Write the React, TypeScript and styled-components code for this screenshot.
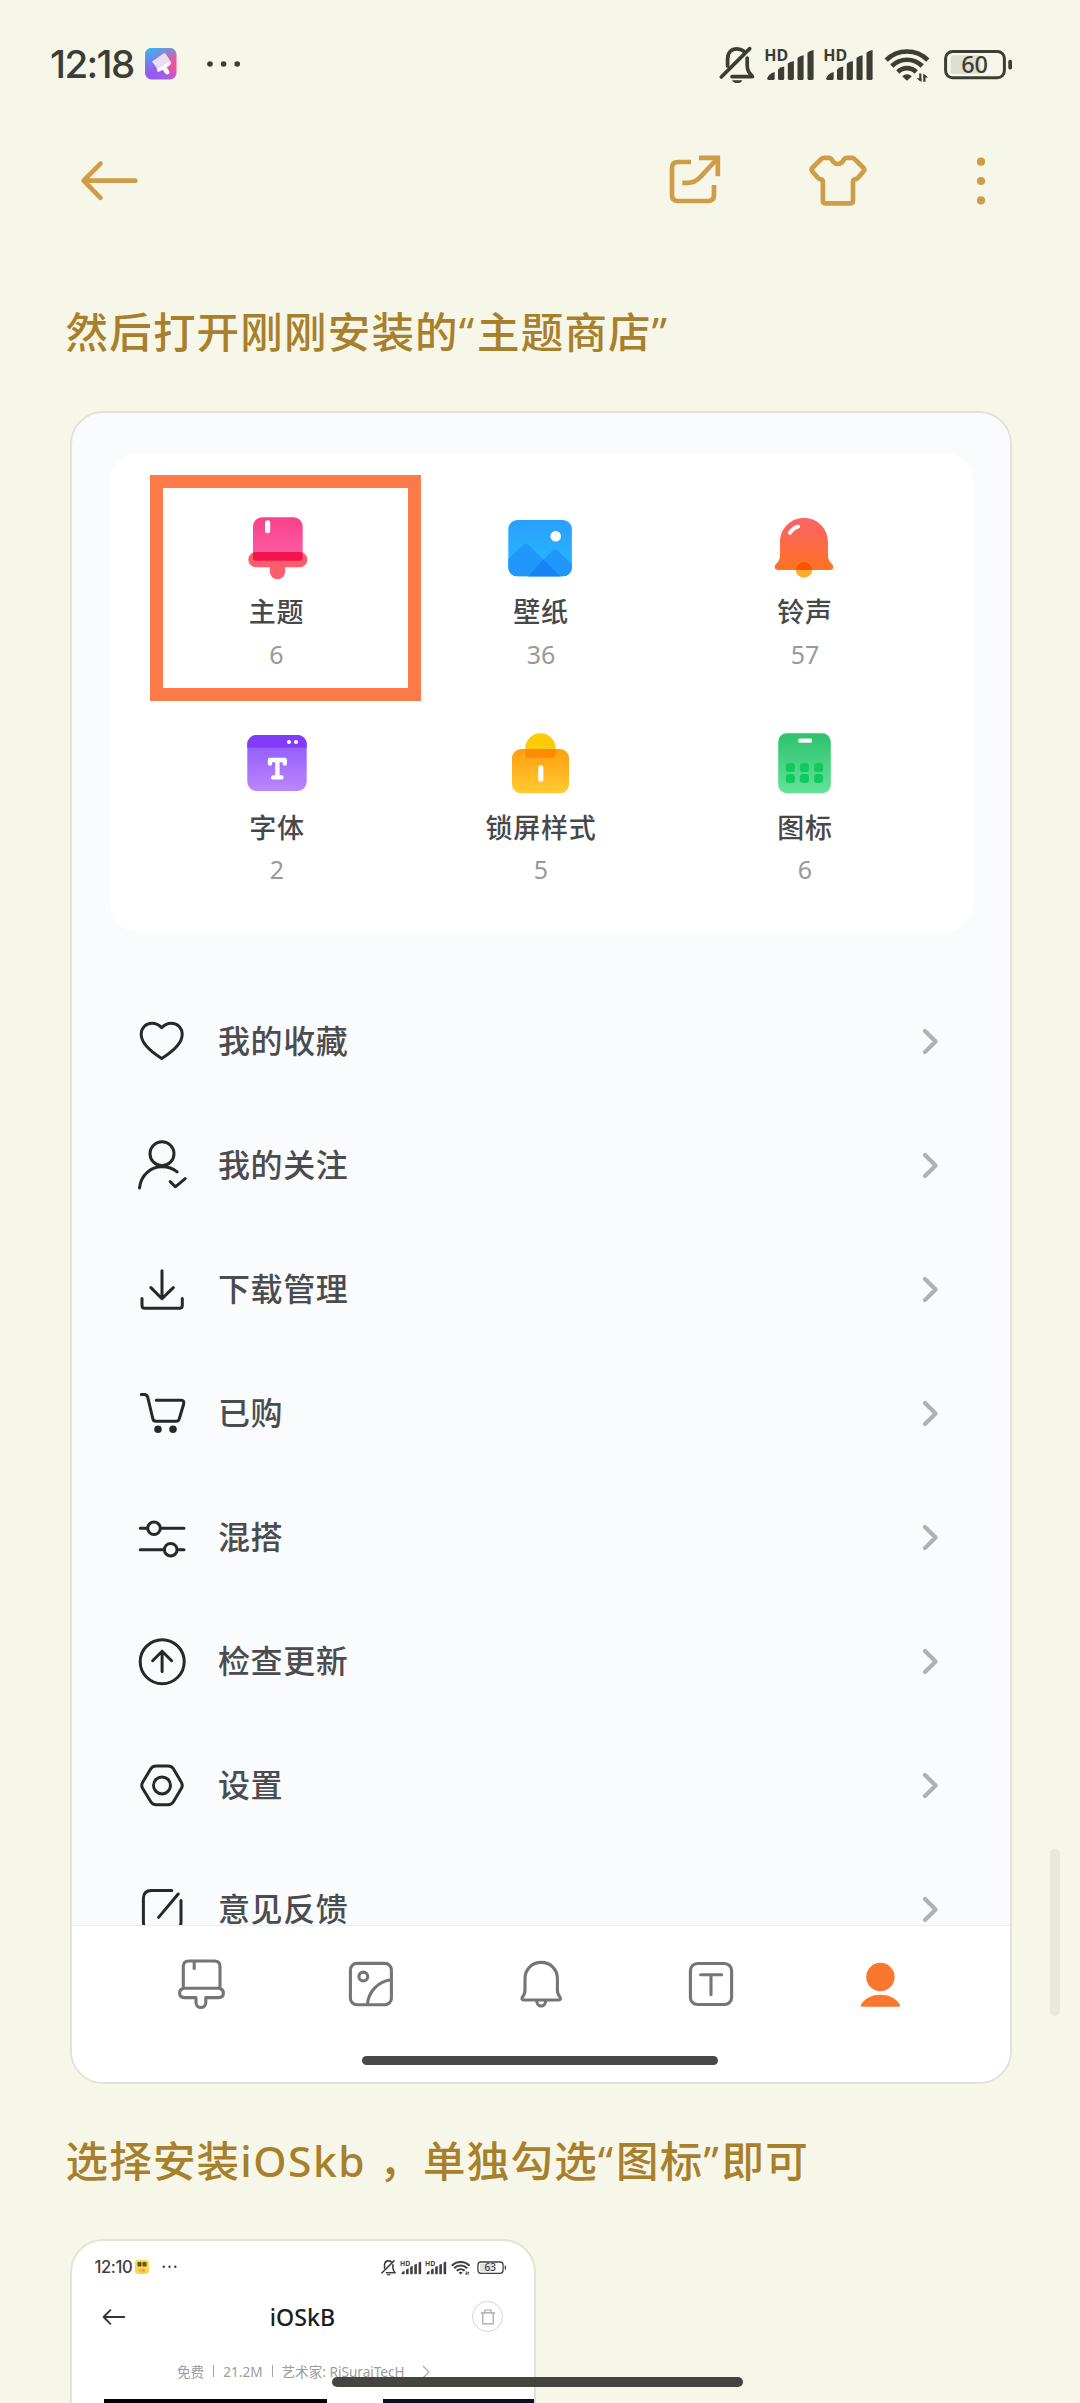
import React from "react";
import styled, { createGlobalStyle } from "styled-components";

const latin = `"Noto Sans", "Noto Sans CJK SC", sans-serif`;

const GlobalStyle = createGlobalStyle`
  * { box-sizing: border-box; }
  body { margin: 0; background: #f6f7e8; font-family: ${latin}; }
  svg { display: block; flex: none; }
`;

const Screen = styled.div`
  position: relative;
  width: 1080px;
  height: 2403px;
  overflow: hidden;
  background: #f6f7e8;
`;

/* ---------- status bar ---------- */

const StatusRow = styled.div`
  display: flex;
  align-items: center;
  height: 128px;
  padding: 0 67px 0 50px;
`;

const Clock = styled.span<{ $size: number; $track: number; $color: string; $width: number }>`
  width: ${(p) => p.$width}px;
  font-family: Inter, ${latin};
  font-size: ${(p) => p.$size}px;
  line-height: 1;
  letter-spacing: ${(p) => p.$track}px;
  font-weight: 500;
  color: ${(p) => p.$color};
  white-space: nowrap;
`;

const Spacer = styled.div`
  flex: 1;
`;

const StatusGroup = styled.div<{ $scale: number }>`
  display: flex;
  gap: ${(p) => 7 * p.$scale}px;
`;

const MoreDots = ({ scale, color }: { scale: number; color: string }) => (
  <svg width={36 * scale} height={8 * scale} viewBox="0 0 36 8" fill={color}>
    <circle cx="4" cy="4" r="2.8" />
    <circle cx="17.6" cy="4" r="2.8" />
    <circle cx="31.2" cy="4" r="2.8" />
  </svg>
);

const Signal = ({ scale, color }: { scale: number; color: string }) => (
  <svg width={52 * scale} height={44 * scale} viewBox="0 0 52 44" fill={color}>
    <text x="0.2" y="18.7" fontSize="16.2" fontWeight="700" textLength="24" lengthAdjust="spacingAndGlyphs">
      HD
    </text>
    <path d="M3.2 36.5Q4.5 31.5 10.7 30V36.5Q10.7 38 9.2 38H4.7Q3.2 38 3.2 36.5Z" />
    <path d="M14 27.5Q16 25 20.2 24.5V36.5Q20.2 38 18.7 38H15.5Q14 38 14 36.5Z" />
    <path d="M23.8 21.5Q26 19.5 29.9 19V36.5Q29.9 38 28.4 38H25.3Q23.8 38 23.8 36.5Z" />
    <path d="M33.5 16Q35.5 13.8 39.6 13.2V36.5Q39.6 38 38.1 38H35Q33.5 38 33.5 36.5Z" />
    <path d="M43.5 10.7Q45.5 8.6 49.6 8V36.5Q49.6 38 48.1 38H45Q43.5 38 43.5 36.5Z" />
  </svg>
);

const StatusIcons = ({ scale, color, fill, level }: { scale: number; color: string; fill: string; level: string }) => (
  <StatusGroup $scale={scale}>
    <svg width={40 * scale} height={44 * scale} viewBox="0 0 40 44" fill="none" stroke={color} strokeWidth="3.7" strokeLinecap="round" strokeLinejoin="round">
      <path d="M4.3 35L32.7 6.6" />
      <path d="M10.6 24V17C10.6 10.5 14.5 6.8 20 6.8C22.5 6.8 24.8 7.6 26.5 9" />
      <path d="M30.2 16V23C30.2 29 32 30.5 35.5 34.6H15" />
      <path d="M15 38.2H25.5C24.5 40.2 22.5 41 20.2 41S16 40.2 15 38.2Z" fill={color} stroke="none" />
    </svg>
    <Signal scale={scale} color={color} />
    <Signal scale={scale} color={color} />
    <svg width={52 * scale} height={44 * scale} viewBox="0 0 52 44" fill="none" stroke={color} strokeWidth="4.6">
      <path d="M4.2 18.2C15.5 6.6 34.5 6.6 45.8 18.2" />
      <path d="M9.8 24C18.3 15.6 31.7 15.6 40.2 24" />
      <path d="M15.8 30C21 24.8 29 24.8 34.2 30" />
      <path d="M20.3 34.4C22.7 31.6 27.3 31.6 29.7 34.4L25 38.7Z" fill={color} stroke="none" />
      <path d="M38.3 31.5V38.5M42.4 39.8V33.5" strokeWidth="2.2" />
      <path d="M34.3 36.2H39.4V40ZM46.2 35.4H41.3V31.5Z" fill={color} stroke="none" />
    </svg>
    <svg width={72 * scale} height={44 * scale} viewBox="0 0 72 44">
      <rect x="9.7" y="13.2" width="30" height="18.6" rx="2" fill={fill} />
      <rect x="4.6" y="9.4" width="58.8" height="26.4" rx="7" fill="none" stroke={color} strokeWidth="3" />
      <rect x="67.3" y="17.8" width="3.7" height="9.6" rx="1.6" fill={color} />
      <text x="33.6" y="30.8" fontSize="23.5" fontWeight="500" textAnchor="middle" fill={color}>
        {level}
      </text>
    </svg>
  </StatusGroup>
);

const ThemeAppIcon = () => (
  <svg width="32" height="32" viewBox="0 0 32 32">
    <defs>
      <linearGradient id="appA" x1="0" y1="1" x2="1" y2="0.2">
        <stop offset="0" stopColor="#8e5cf9" />
        <stop offset="0.45" stopColor="#a35be8" />
        <stop offset="0.75" stopColor="#f0509f" />
        <stop offset="1" stopColor="#f2559e" />
      </linearGradient>
      <linearGradient id="appB" x1="0.25" y1="0" x2="0.5" y2="0.6">
        <stop offset="0" stopColor="#37b2f2" />
        <stop offset="1" stopColor="#37b2f2" stopOpacity="0" />
      </linearGradient>
    </defs>
    <rect width="31.5" height="31.5" rx="6.5" fill="url(#appA)" />
    <rect width="31.5" height="31.5" rx="6.5" fill="url(#appB)" />
    <path d="M7 13.5L18.5 5.5Q20 4.8 20.8 6L25 12.5L12 20.5Z" fill="#e9def6" />
    <path d="M12 20.5L25 12.5Q27 15.5 24.8 17.3L21.8 19.2L24.3 23.5C25.4 26 22 27.8 20.4 25.5L17.6 21.7L14.5 23.6Q12.8 24.2 11.8 22.4Z" fill="#fff" />
  </svg>
);

const IconSlot = styled.div<{ $right: number }>`
  margin-right: ${(p) => p.$right}px;
`;

/* ---------- top app bar ---------- */

const AppBar = styled.header`
  display: flex;
  align-items: center;
  height: 106px;
  padding: 0 63px 0 73px;
`;

const AppBarActions = styled.div`
  display: flex;
  gap: 71px;
  margin-left: auto;
`;

const gold = { fill: "none", stroke: "#cf9d48", strokeWidth: 4.7 } as const;

const BackIcon = () => (
  <svg width="72" height="72" viewBox="0 0 72 72" {...gold} strokeLinecap="round" strokeLinejoin="round">
    <path d="M27.5 18.6L10.6 35.7L27.5 52.8M10.6 35.7H62.4" />
  </svg>
);

const ShareIcon = () => (
  <svg width="72" height="72" viewBox="0 0 72 72" {...gold}>
    <path d="M32 17H19Q13 17 13 23V50Q13 56 19 56H49Q55 56 55 50V40" />
    <path d="M40 12.9H58.8V31.3" />
    <path d="M58 14L41.5 31.8Q36 37.8 28 37.8H23.3" />
  </svg>
);

const ShirtIcon = () => (
  <svg width="72" height="72" viewBox="0 0 72 72" {...gold} strokeLinejoin="round">
    <path d="M22 12.8H27Q28.6 12.8 29.4 14.2C31 17.2 32.8 19 35.8 19S40.6 17.2 42.2 14.2Q43 12.8 44.6 12.8H50Q51.4 12.8 52.4 13.8L61.6 23Q63 24.6 61.6 26.2L56.3 32.6Q54.8 34.3 53 34.3Q51 34.6 51 37V55.8Q51 58.3 48.5 58.3H23.4Q20.9 58.3 20.9 55.8V37Q20.9 34.6 18.9 34.3Q17 34.3 15.6 32.6L10.2 26.2Q9 24.6 10.2 23L19.6 13.8Q20.6 12.8 22 12.8Z" />
  </svg>
);

const KebabIcon = () => (
  <svg width="72" height="72" viewBox="0 0 72 72" fill="#cf9d48">
    <circle cx="36" cy="16.7" r="4.1" />
    <circle cx="36" cy="36" r="4.1" />
    <circle cx="36" cy="55.4" r="4.1" />
  </svg>
);

/* ---------- article ---------- */

const Article = styled.main`
  display: flex;
  flex-direction: column;
  padding-top: 68px;
`;

const Heading = styled.p`
  margin: 0 0 0 65.5px;
  height: 60px;
  font-size: 42.5px;
  font-weight: 500;
  line-height: 60px;
  letter-spacing: 1.2px;
  color: #a8802c;
  white-space: nowrap;
`;

const Latin = styled.span`
  margin-right: 1px;
  letter-spacing: 1.5px;
`;

const Quote = styled.span`
  font-weight: 400;
  letter-spacing: 2.9px;
`;

const Shot = styled.section`
  display: flex;
  flex-direction: column;
  width: 942px;
  height: 1673px;
  margin: 49px 0 47px 70px;
  border: 2px solid #e1e3d7;
  border-radius: 33px;
  background: #fafbfd;
  overflow: hidden;
`;

const ScrollPane = styled.div`
  height: 1512px;
  overflow: hidden;
`;

const Grid = styled.div`
  display: grid;
  grid-template-columns: repeat(3, 264px);
  grid-auto-rows: 215.5px;
  width: 863px;
  height: 479px;
  margin: 40px 0 0 38px;
  padding: 22px 0 0 35px;
  border-radius: 28px;
  background: #fff;
`;

const Tile = styled.div<{ $marked?: boolean }>`
  display: flex;
  flex-direction: column;
  align-items: center;
  padding-top: 37px;
  ${(p) =>
    p.$marked
      ? `width: 271px; height: 225.5px;
         margin-left: 5px; padding: 24px 18px 0 0;
         border: 13px solid #fc7b49;`
      : ""}
`;

const TileLabel = styled.span`
  margin-top: 10px;
  height: 36px;
  font-size: 27px;
  font-weight: 500;
  line-height: 36px;
  letter-spacing: 0.8px;
  color: #47484a;
  white-space: nowrap;
`;

const TileCount = styled.span`
  margin-top: 5.5px;
  height: 36px;
  font-size: 25px;
  line-height: 36px;
  color: #999;
`;

const TileIcon = ({ children }: { children: React.ReactNode }) => (
  <svg width="72" height="72" viewBox="0 0 72 72">
    {children}
  </svg>
);

const Gradient = ({ id, from, to }: { id: string; from: string; to: string }) => (
  <defs>
    <linearGradient id={id} x1="0" y1="0" x2="0" y2="1">
      <stop offset="0" stopColor={from} />
      <stop offset="1" stopColor={to} />
    </linearGradient>
  </defs>
);

const tiles = [
  {
    label: "主题",
    count: "6",
    marked: true,
    art: (
      <>
        <Gradient id="pink" from="#f9418b" to="#fd60a5" />
        <rect x="12" y="5.3" width="49.7" height="43.5" rx="9" fill="url(#pink)" />
        <path d="M15 40H58.7A7.6 7.6 0 0 1 58.7 55.3H44.2V59.5A7.7 7.7 0 0 1 28.8 59.5V55.3H15A7.6 7.6 0 0 1 15 40Z" fill="#fb5d6c" />
        <path d="M12 40.5Q13.2 40 15 40H58.7Q60.5 40 61.7 40.5V47Q61.7 48.8 59.5 48.8H14.5Q12 48.8 12 47Z" fill="#f3134f" />
        <rect x="24" y="8.3" width="5.2" height="13" rx="2.4" fill="#fff" />
      </>
    ),
  },
  {
    label: "壁纸",
    count: "36",
    art: (
      <>
        <Gradient id="blue" from="#2a9ffc" to="#24bcfd" />
        <clipPath id="frame">
          <rect x="3.3" y="8" width="63.6" height="56.3" rx="9" />
        </clipPath>
        <g clipPath="url(#frame)">
          <rect x="3" y="8" width="65" height="57" fill="url(#blue)" />
          <path d="M3 47L18.8 32.4Q21 30.6 23.2 32.4L56 65H3Z" fill="#2196fb" />
          <path d="M23 65L47.5 38.2Q49.8 36.4 52 38.2L68 53V65Z" fill="#2196fb" />
          <path d="M38.3 47.6L56 65H23Z" fill="#1583f3" />
        </g>
        <circle cx="50.7" cy="24.3" r="5.3" fill="#fff" />
      </>
    ),
  },
  {
    label: "铃声",
    count: "57",
    art: (
      <>
        <Gradient id="coral" from="#fb6269" to="#ff7222" />
        <path d="M35 6C48.5 6 59 16.5 59 30V42C59 47 60 49 63 52C65.5 55 64 58 61 58H9C6 58 4.5 55 7 52C10 49 11 47 11 42V30C11 16.5 21.5 6 35 6Z" fill="url(#coral)" />
        <circle cx="35" cy="57.5" r="8.2" fill="#fcab2a" />
        <path d="M26.8 58A8.2 8.2 0 0 1 43.2 58Z" fill="#fb5307" />
        <path d="M21 20.8Q23.8 16 29 14.6" fill="none" stroke="#fff" strokeWidth="4" strokeLinecap="round" />
      </>
    ),
  },
  {
    label: "字体",
    count: "2",
    art: (
      <>
        <Gradient id="violet" from="#8a55fb" to="#bb86fd" />
        <rect x="6.3" y="7" width="59.4" height="56" rx="9" fill="url(#violet)" />
        <path d="M6.3 19.7V16A9 9 0 0 1 15.3 7H56.7A9 9 0 0 1 65.7 16V19.7Z" fill="#803cf8" />
        <circle cx="48" cy="14" r="2.1" fill="#fff" />
        <circle cx="55" cy="14" r="2.1" fill="#fff" />
        <path d="M29 35.5V32H43.8V35.5M36.4 32V49.2M32.3 49.4H40.5" fill="none" stroke="#fff" strokeWidth="4.4" strokeLinecap="round" strokeLinejoin="round" />
      </>
    ),
  },
  {
    label: "锁屏样式",
    count: "5",
    art: (
      <>
        <Gradient id="amber" from="#ff9f0d" to="#ffcb33" />
        <path d="M20.3 29.7V20.5A15.2 15.2 0 0 1 50.7 20.5V29.7Z" fill="#fdcb06" />
        <rect x="7" y="21" width="57" height="44.3" rx="9" fill="url(#amber)" />
        <path d="M20.3 21H50.7V27.5Q50.7 29.7 48.5 29.7H22.5Q20.3 29.7 20.3 27.5Z" fill="#fb8c04" />
        <rect x="33.2" y="37.3" width="5.2" height="16.7" rx="2.4" fill="#fff" />
      </>
    ),
  },
  {
    label: "图标",
    count: "6",
    art: (
      <>
        <Gradient id="green" from="#2cc26d" to="#64e398" />
        <rect x="9.2" y="5.3" width="52.6" height="60" rx="8.5" fill="url(#green)" />
        <rect x="29.3" y="10.6" width="13.6" height="4.2" rx="1.4" fill="#fff" />
        {[21.4, 35.4, 49.6].map((x) =>
          [39.6, 50.4].map((y) => (
            <rect key={`${x}-${y}`} x={x - 4.5} y={y - 4.5} width="9" height="9" rx="3.2" fill="#12c95f" />
          )),
        )}
      </>
    ),
  },
];

/* ---------- menu list ---------- */

const Menu = styled.ul`
  margin: 46.5px 0 0;
  padding: 0;
  list-style: none;
`;

const MenuRow = styled.li`
  display: flex;
  align-items: center;
  height: 124px;
  padding: 0 67px 0 61px;
`;

const MenuLabel = styled.span`
  flex: 1;
  margin-left: 29px;
  font-size: 32px;
  font-weight: 500;
  line-height: 32px;
  letter-spacing: 0.6px;
  color: #4b4c4f;
`;

const Chevron = () => (
  <svg width="24" height="32" viewBox="0 0 24 32" fill="none" stroke="#afb1b3" strokeWidth="4.2" strokeLinecap="round" strokeLinejoin="round">
    <path d="M6 6L16.6 16.5L6 27" />
  </svg>
);

const menu = [
  {
    label: "我的收藏",
    art: (
      <path d="M28.7 14.6C25.5 11.3 22 10.2 19 10.2C12.5 10.2 8.2 15 8.2 21.5C8.2 30 18.5 39 28.7 45.5C39 39 49.2 30 49.2 21.5C49.2 15 44.8 10.2 38.4 10.2C35.2 10.2 31.8 11.3 28.7 14.6Z" />
    ),
  },
  {
    label: "我的关注",
    art: (
      <>
        <circle cx="29" cy="16.7" r="12" />
        <path d="M6.5 51C8 37.5 18 29.7 29 29.7C34.8 29.7 40 31.4 44.2 34.8M37.2 44.6L42.3 49.8L52.2 41.6" />
      </>
    ),
  },
  {
    label: "下载管理",
    art: <path d="M29 9.8V37.5M17.9 26.6L29 37.8L40.3 26.6M9 37.5V44.5Q9 47.2 11.7 47.2H46.6Q49.3 47.2 49.3 44.5V37.5" />,
  },
  {
    label: "已购",
    art: (
      <>
        <path d="M8.3 9.4H11.2Q14 9.4 14.7 12.2L19.9 34Q20.5 36.2 22.8 36.2H43.2Q45.4 36.2 46.2 34L50.6 19.3Q51.6 15.2 48.2 15.2H23.3" />
        <circle cx="25" cy="44.3" r="2.3" fill="#26282a" />
        <circle cx="40" cy="44.3" r="2.3" fill="#26282a" />
      </>
    ),
  },
  {
    label: "混搭",
    art: (
      <>
        <path d="M7.3 19.3H14.3M27.7 19.3H51M7.3 40.7H30.8M44.6 40.7H51" />
        <circle cx="21" cy="19.3" r="6.3" />
        <circle cx="37.7" cy="40.7" r="6.3" />
      </>
    ),
  },
  {
    label: "检查更新",
    art: (
      <>
        <circle cx="29.2" cy="28.7" r="22" />
        <path d="M29.1 38.5V18.5M19.6 27.7L29.1 18.2L38.6 27.7" />
      </>
    ),
  },
  {
    label: "设置",
    art: (
      <>
        <path d="M23.2 9H35Q38.6 9 40.4 11.8L48.3 25.2Q50.2 28.4 48.3 31.5L40.4 44.8Q38.6 47.7 35 47.7H23.2Q19.6 47.7 17.8 44.8L9.7 31.5Q7.8 28.4 9.7 25.2L17.8 11.8Q19.6 9 23.2 9Z" />
        <circle cx="29" cy="28.4" r="8.5" />
      </>
    ),
  },
  {
    label: "意见反馈",
    art: <path d="M38.8 9.4H18.5Q10.4 9.4 10.4 17.5V41Q10.4 48 17.5 48H41Q48 48 48 41V19.5M45.2 13L25.6 36.4" />,
  },
];

/* ---------- tab bar ---------- */

const TabBar = styled.nav`
  display: flex;
  flex: 1;
  flex-direction: column;
  align-items: center;
  border-top: 1px solid #ebedee;
  background: #fff;
`;

const Tabs = styled.div`
  display: grid;
  grid-template-columns: repeat(5, 170px);
  justify-items: center;
  margin-top: 28px;
`;

const HomeLine = styled.div`
  width: 356px;
  height: 9px;
  margin: 42px 2px 0 0;
  border-radius: 5px;
  background: #484848;
`;

const TabIcon = ({ children }: { children: React.ReactNode }) => (
  <svg width="60" height="60" viewBox="0 0 60 60" fill="none" stroke="#757575" strokeWidth="3.1" strokeLinejoin="round">
    {children}
  </svg>
);

/* ---------- second screenshot ---------- */

const SmallShot = styled.section`
  flex: none;
  width: 466px;
  height: 170px;
  margin: 48px 0 0 70px;
  border: 2px solid #e1e3d7;
  border-bottom: 0;
  border-radius: 33px 33px 0 0;
  background: #fff;
  overflow: hidden;
`;

const SmallStatus = styled.div`
  display: flex;
  align-items: center;
  height: 52px;
  padding: 0 27.6px 0 22.5px;
`;

const SmallBar = styled.div`
  display: grid;
  grid-template-columns: 40px 1fr 40px;
  align-items: center;
  height: 47px;
  padding: 0 31px 0 30px;
`;

const SmallTitle = styled.span`
  font-size: 23.2px;
  line-height: 32px;
  font-weight: 500;
  text-align: center;
  color: #1c1d1f;
`;

const TrashButton = styled.div`
  display: grid;
  place-items: center;
  justify-self: end;
  width: 31px;
  height: 31px;
  border: 1px solid #d5d5d5;
  border-radius: 50%;
`;

const Meta = styled.div`
  display: flex;
  align-items: center;
  height: 22px;
  margin: 21px 0 0 105px;
  font-size: 13.6px;
  line-height: 22px;
  color: #9c9c9c;
  white-space: nowrap;
`;

const MetaRule = styled.i`
  width: 1px;
  height: 12px;
  margin: 0 9px 2px;
  background: #a5a5a5;
`;

const Artist = styled.span`
  margin-right: 17px;
`;

const Previews = styled.div`
  display: flex;
  gap: 56px;
  margin: 16px 0 0 32px;
`;

const Preview = styled.div<{ $tone: string }>`
  flex: none;
  width: 223px;
  height: 10px;
  background: ${(p) => p.$tone};
`;

const StickerIcon = () => (
  <svg width="14" height="14" viewBox="0 0 14 14">
    <rect width="14" height="14" rx="3" fill="#f6dc4c" />
    <rect x="2.5" y="2" width="4" height="4.6" rx="0.8" fill="#5f4e18" />
    <rect x="7.4" y="2" width="4.2" height="4.6" rx="0.8" fill="#6b5516" />
    <ellipse cx="7" cy="10.4" rx="3.6" ry="2.2" fill="#f6b65c" />
    <circle cx="8.4" cy="10.4" r="1" fill="#ef7f6a" />
  </svg>
);

/* ---------- overlays ---------- */

const ScrollThumb = styled.div`
  position: absolute;
  top: 1849px;
  right: 20px;
  width: 10px;
  height: 167px;
  border-radius: 5px;
  background: #e8e9dc;
`;

const GestureBar = styled.div`
  position: absolute;
  bottom: 16px;
  left: 332px;
  width: 411px;
  height: 10px;
  border-radius: 5px;
  background: rgba(54, 54, 50, 0.93);
`;

export default function App() {
  return (
    <Screen>
      <GlobalStyle />
      <StatusRow>
        <Clock $size={38.5} $track={-1.6} $color="#3c3d34" $width={95}>
          12:18
        </Clock>
        <IconSlot $right={29}>
          <ThemeAppIcon />
        </IconSlot>
        <MoreDots scale={1} color="#3c3d34" />
        <Spacer />
        <StatusIcons scale={1} color="#3c3d34" fill="#dcdecf" level="60" />
      </StatusRow>

      <AppBar>
        <BackIcon />
        <AppBarActions>
          <ShareIcon />
          <ShirtIcon />
          <KebabIcon />
        </AppBarActions>
      </AppBar>

      <Article>
        <Heading>
          然后打开刚刚安装的<Quote>“</Quote>主题商店<Quote>”</Quote>
        </Heading>

        <Shot>
          <ScrollPane>
            <Grid>
              {tiles.map((t) => (
                <Tile key={t.label} $marked={t.marked}>
                  <TileIcon>{t.art}</TileIcon>
                  <TileLabel>{t.label}</TileLabel>
                  <TileCount>{t.count}</TileCount>
                </Tile>
              ))}
            </Grid>
            <Menu>
              {menu.map((m) => (
                <MenuRow key={m.label}>
                  <svg width="56" height="56" viewBox="0 0 56 56" fill="none" stroke="#26282a" strokeWidth="3" strokeLinecap="round" strokeLinejoin="round">
                    {m.art}
                  </svg>
                  <MenuLabel>{m.label}</MenuLabel>
                  <Chevron />
                </MenuRow>
              ))}
            </Menu>
          </ScrollPane>
          <TabBar>
            <Tabs>
              <TabIcon>
                <path d="M12.3 34.3V12.5Q12.3 7 17.8 7H43.5Q49 7 49 12.5V34.3M23.2 7V15.8" />
                <path d="M12.8 34.3H48.3Q52.4 35.5 52.4 39Q52.4 43.6 47.5 43.6H34.8V48.6A4.9 4.9 0 0 1 25 48.6V43.6H13.5Q8.6 43.6 8.6 39Q8.6 35.5 12.8 34.3Z" />
              </TabIcon>
              <TabIcon>
                <rect x="9.4" y="9.4" width="41" height="41.3" rx="6.5" />
                <circle cx="22.3" cy="22.5" r="4.4" />
                <path d="M26.3 50.5C27.6 37.5 37 27.3 50.4 25.8" />
              </TabIcon>
              <TabIcon>
                <path d="M30.2 8.4C39.5 8.4 46.4 15.4 46.4 24.5V36C46.4 39.5 46.8 40.8 48.8 42.8Q50.6 46 47.5 46H12.9Q9.8 46 11.6 42.8C13.6 40.8 14 39.5 14 36V24.5C14 15.4 20.9 8.4 30.2 8.4Z" />
                <path d="M25.7 46.5C25.7 53.8 34.7 53.8 34.7 46.5" />
              </TabIcon>
              <TabIcon>
                <rect x="9.4" y="9.5" width="41.2" height="41" rx="7" />
                <path d="M19.6 20.8H40.6M30 20.8V40.6" strokeLinecap="round" />
              </TabIcon>
              <TabIcon>
                <g fill="#fb772f" stroke="none">
                  <circle cx="29.4" cy="23" r="14.2" />
                  <path d="M10.2 50.2C14.3 44 21.5 40.8 29.4 40.8S44.5 44 48.6 50.2Q50 52.7 47.4 52.7H11.4Q8.8 52.7 10.2 50.2Z" />
                </g>
              </TabIcon>
            </Tabs>
            <HomeLine />
          </TabBar>
        </Shot>

        <Heading>
          选择安装<Latin>iOSkb</Latin> ，单独勾选<Quote>“</Quote>图标<Quote>”</Quote>即可
        </Heading>

        <SmallShot>
          <SmallStatus>
            <Clock $size={16.6} $track={-0.4} $color="#3f4042" $width={40.5}>
              12:10
            </Clock>
            <IconSlot $right={12.5}>
              <StickerIcon />
            </IconSlot>
            <MoreDots scale={0.427} color="#3f4042" />
            <Spacer />
            <StatusIcons scale={0.427} color="#3f4042" fill="#dedede" level="63" />
          </SmallStatus>
          <SmallBar>
            <svg width="24" height="18" viewBox="0 0 24 18" fill="none" stroke="#333436" strokeWidth="1.9" strokeLinecap="round" strokeLinejoin="round">
              <path d="M8.4 2.2L1.6 9L8.4 15.8M1.6 9H22.3" />
            </svg>
            <SmallTitle>iOSkB</SmallTitle>
            <TrashButton>
              <svg width="18" height="18" viewBox="0 0 18 18" fill="none" stroke="#a3a3a3" strokeWidth="1.2" strokeLinejoin="round">
                <path d="M1.8 4.8H16.2M6 4.6V2H12V4.6M3.8 5V15.8H14.2V5" />
              </svg>
            </TrashButton>
          </SmallBar>
          <Meta>
            <span>免费</span>
            <MetaRule />
            <span>21.2M</span>
            <MetaRule />
            <Artist>艺术家: RiSurajTecH</Artist>
            <svg width="8" height="14" viewBox="0 0 8 14" fill="none" stroke="#a8a8a8" strokeWidth="1.1">
              <path d="M1 1L7 7L1 13" />
            </svg>
          </Meta>
          <Previews>
            <Preview $tone="#040308" />
            <Preview $tone="#04131d" />
          </Previews>
        </SmallShot>
      </Article>

      <ScrollThumb />
      <GestureBar />
    </Screen>
  );
}
